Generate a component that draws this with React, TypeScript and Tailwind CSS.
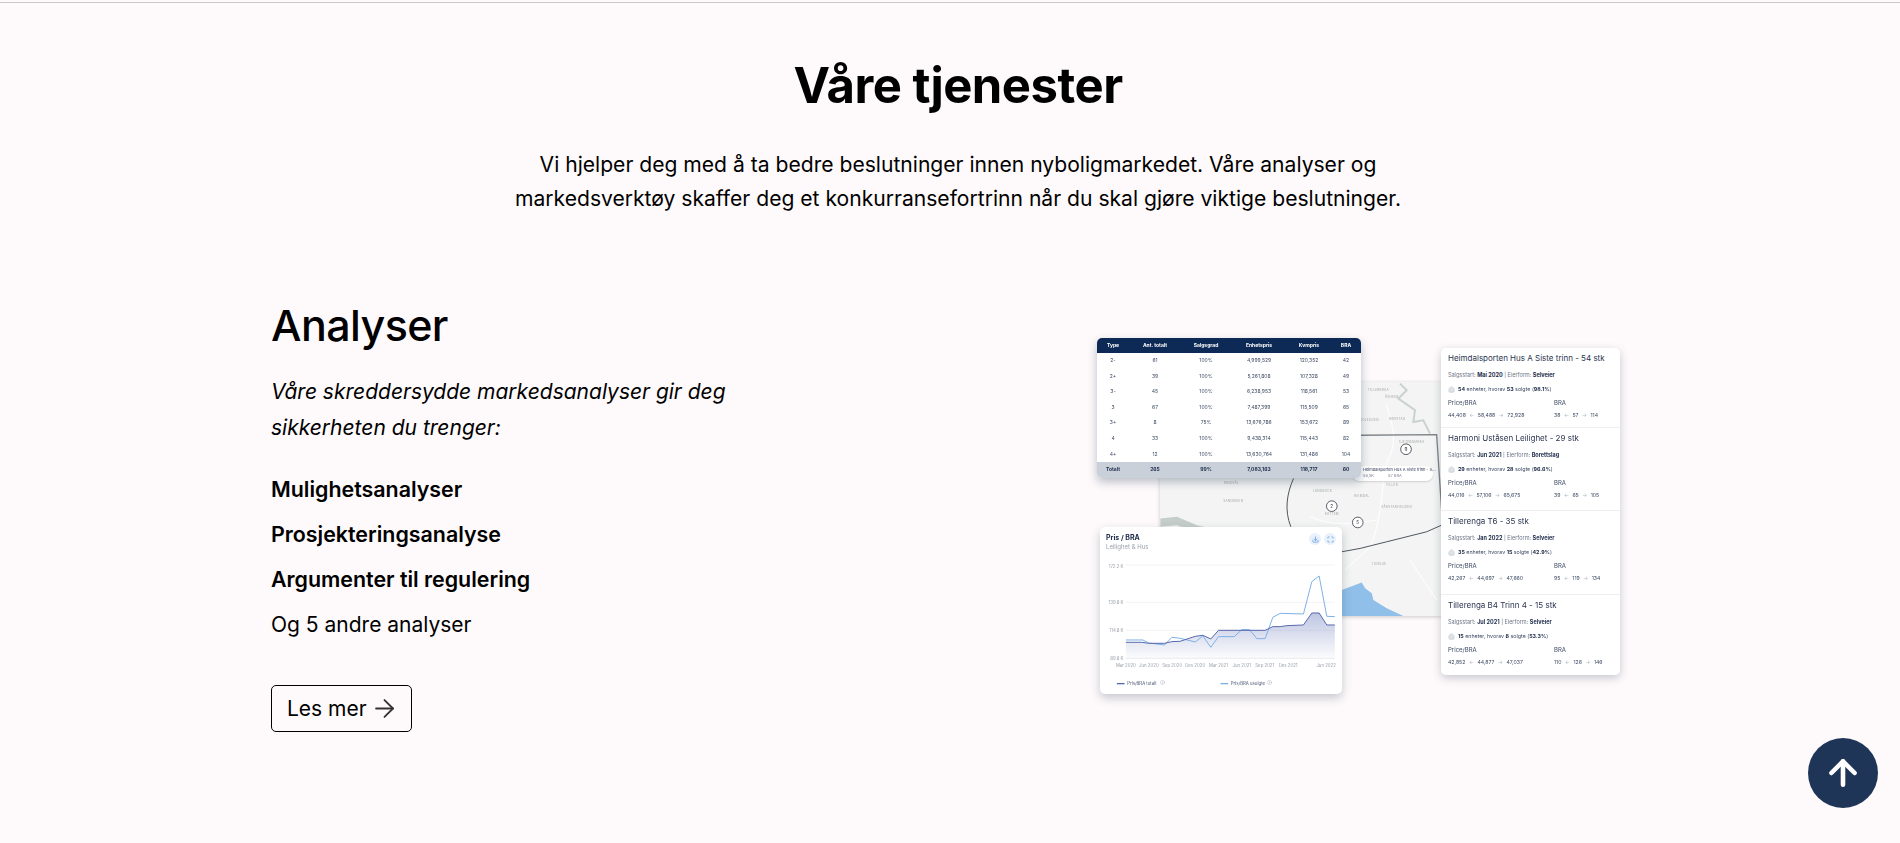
import { ArrowRight, ArrowUp, Download, Scan, House, Info } from 'lucide-react';

const TABLE_ROWS = [
  ['2-', '61', '100%', '4,999,529', '120,352', '42'],
  ['2+', '39', '100%', '5,261,808', '107,328', '49'],
  ['3-', '45', '100%', '6,238,953', '118,561', '53'],
  ['3', '67', '100%', '7,487,399', '115,509', '65'],
  ['3+', '8', '75%', '13,676,786', '153,672', '89'],
  ['4', '33', '100%', '9,438,314', '115,443', '82'],
  ['4+', '12', '100%', '13,630,764', '131,486', '104'],
];

const PROJECTS = [
  { title: 'Heimdalsporten Hus A Siste trinn - 54 stk', start: 'Mai 2020', form: 'Selveier', units: '54', sold: '53', pct: '98.1%', price: ['44,408', '58,488', '72,928'], bra: ['38', '57', '114'], h: 'h-[79px]' },
  { title: 'Harmoni Uståsen Leilighet - 29 stk', start: 'Jun 2021', form: 'Borettslag', units: '29', sold: '28', pct: '96.6%', price: ['44,016', '57,106', '65,675'], bra: ['39', '65', '105'], h: 'h-[82px]' },
  { title: 'Tillerenga T6 - 35 stk', start: 'Jan 2022', form: 'Selveier', units: '35', sold: '15', pct: '42.9%', price: ['42,267', '44,697', '47,660'], bra: ['95', '119', '134'], h: 'h-[83px]' },
  { title: 'Tillerenga B4 Trinn 4 - 15 stk', start: 'Jul 2021', form: 'Selveier', units: '15', sold: '8', pct: '53.3%', price: ['42,852', '44,877', '47,037'], bra: ['110', '126', '146'], h: 'h-[80px]' },
];

const LIGHT_LINE = '137,390 188,390 205,399 253,405 275,382 300,385 345,396 368,378 392,412 415,380 462,380 485,359 508,359 530,386 555,386 578,322 600,310 670,312 695,215 717,198 740,319 764,320';
const DARK_LINE = '137,397 185,397 205,400 253,400 275,395 300,394 345,379 368,376 392,387 415,361 555,361 578,350 600,350 620,347 670,345 695,309 717,309 740,345 764,345';

function PriceTable() {
  const cols = 'grid grid-cols-[32px_52px_50px_56px_44px_30px] items-center text-center';
  return (
    <div className="absolute left-[147px] top-0 z-20 w-[264px] overflow-hidden rounded-[5px] bg-white shadow-[0_4px_10px_rgba(30,50,80,0.3)]">
      <div className={`${cols} h-[15px] bg-[#0d2a57] text-[5px] font-bold text-white`}>
        {['Type', 'Ant. totalt', 'Salgsgrad', 'Enhetspris', 'Kvmpris', 'BRA'].map(h => <div key={h}>{h}</div>)}
      </div>
      {TABLE_ROWS.map(row => (
        <div key={row[0]} className={`${cols} h-[15.6px] text-[5px] text-[#3d4a63]`}>
          {row.map((c, i) => <div key={i}>{c}</div>)}
        </div>
      ))}
      <div className={`${cols} h-[15.8px] bg-[#c9d0da] text-[5px] font-bold text-[#1c2c4a]`}>
        {['Totalt', '265', '99%', '7,083,163', '118,717', '60'].map(h => <div key={h}>{h}</div>)}
      </div>
    </div>
  );
}

function MapPin({ x, y, n }: { x: number; y: number; n: string }) {
  return (
    <g>
      <circle cx={x} cy={y} r="16" fill="#fff" stroke="#3a3f4a" strokeWidth="2.5" />
      <text x={x} y={y + 5} textAnchor="middle" fontSize="14" fill="#333">{n}</text>
    </g>
  );
}

function MapLayer() {
  const labels: [string, number, number][] = [
    ['TILLER', 396, 346], ['HEIMDAL', 305, 382], ['LUNDBUCK', 187, 365], ['KATTEM', 215, 434],
    ['VÅRSTADHAUGEN', 410, 414], ['TUNSJØ', 356, 585], ['SJETNEMARKA', 455, 217], ['RØSSTAD', 412, 148],
    ['SOLEGGEN', 328, 153], ['TILLERBRUA', 355, 62], ['ÅSHEIM', 395, 84], ['RINGVÅL', -87, 342], ['SANDMOEN', -81, 396],
  ];
  return (
    <div className="absolute left-[210px] top-[44px] z-0 h-[234px] w-[282px] bg-[#f3f4f3] shadow-[0_1px_4px_rgba(0,0,0,0.2)]">
      <svg viewBox="-300 35 845 703" className="block h-full w-full">
        <path d="M-300 480 L-240 470 L-190 486 L-150 500 L-120 520 L-120 738 L-300 738 Z" fill="#6fa5df" />
        <path d="M-300 445 L-250 440 L-190 465 L-130 480 L-105 505 L-125 512 L-150 490 L-205 480 L-250 465 L-300 470 Z" fill="#c4cdc9" />
        <path d="M245 660 L305 637 L315 655 L335 670 L340 690 L380 715 L430 738 L245 738 Z" fill="#90bfe9" />
        <path d="M420 40 L440 60 L415 85 L465 120 L460 155 L490 150 L510 190" fill="none" stroke="#c9d2cf" strokeWidth="6" />
        <path d="M380 100 C390 160 420 200 380 280 C360 360 370 440 330 530 L255 600 M150 440 C220 470 280 460 350 450 M450 570 L530 690" fill="none" stroke="#fff" strokeWidth="3" />
        <path d="M300 195 L530 193 L545 420" fill="none" stroke="#7e8489" strokeWidth="4" />
        <path d="M100 325 C80 370 72 420 92 470" fill="none" stroke="#50555d" strokeWidth="3" />
        <path d="M545 465 L500 485 L380 515 L300 535 L245 545" fill="none" stroke="#50555d" strokeWidth="3" />
        {labels.map(([t, x, y]) => (
          <text key={t} x={x} y={y} textAnchor="middle" fontSize="9" letterSpacing="1" fill="#a3a8a8">{t}</text>
        ))}
        <MapPin x={438} y={237} n="9" />
        <MapPin x={215} y={408} n="2" />
        <MapPin x={293} y={457} n="5" />
      </svg>
      <div className="absolute left-[192px] top-[84px] h-[15px] w-[81px] rounded-[7px] bg-white pl-[11px] pt-[1px] text-[4px] leading-[6px] text-[#2a3550] shadow-[0_1px_2px_rgba(0,0,0,0.15)]">
        <div className="whitespace-nowrap">Heimdalsporten Hus A Siste trinn - S...</div>
        <div className="flex gap-[14px] text-[#7a8190]"><span>58,5K</span><span>57 BRA</span></div>
      </div>
    </div>
  );
}

function PriceChart() {
  return (
    <div className="absolute left-[150px] top-[189px] z-20 h-[167px] w-[242px] rounded-[5px] bg-white shadow-[0_4px_10px_rgba(30,50,80,0.25)]">
      <div className="flex h-[32.7px] items-start justify-between pl-[6px] pr-[6px] pt-[6px]">
        <div>
          <div className="text-[7px] font-bold leading-[9px] text-[#1b2a4a]">Pris / BRA</div>
          <div className="text-[6px] leading-[9px] text-[#9aa1ad]">Leilighet &amp; Hus</div>
        </div>
        <div className="flex gap-[3px]">
          <div className="flex h-[12px] w-[12px] items-center justify-center rounded-full bg-[#e8f1fc]"><Download size={7} color="#3f83d6" /></div>
          <div className="flex h-[12px] w-[12px] items-center justify-center rounded-full bg-[#e8f1fc]"><Scan size={7} color="#3f83d6" /></div>
        </div>
      </div>
      <svg viewBox="60 150 725 403" className="block h-[134.3px] w-[242px]">
        <defs>
          <linearGradient id="area" x1="0" y1="0" x2="0" y2="1">
            <stop offset="0" stopColor="#5b6fb5" stopOpacity="0.4" />
            <stop offset="1" stopColor="#5b6fb5" stopOpacity="0.02" />
          </linearGradient>
        </defs>
        {[165, 277, 361].map(y => <line key={y} x1="137" x2="764" y1={y} y2={y} stroke="#ececec" strokeWidth="2" />)}
        <line x1="137" x2="764" y1="445" y2="445" stroke="#d5d5d5" strokeWidth="1.5" />
        <polygon points={`${DARK_LINE} 764,445 137,445`} fill="url(#area)" />
        <polyline points={LIGHT_LINE} fill="none" stroke="#7db0e6" strokeWidth="3" />
        <polyline points={DARK_LINE} fill="none" stroke="#5568ad" strokeWidth="3" />
        {[['172.2 K', 173], ['139.8 K', 281], ['114.8 K', 366], ['89.8 K', 449]].map(([t, y]) => (
          <text key={t} x="130" y={y} textAnchor="end" fontSize="13" fill="#9aa0a8">{t}</text>
        ))}
        {[['Mar 2020', 137], ['Jun 2020', 206], ['Sep 2020', 276], ['Des 2020', 345], ['Mar 2021', 415], ['Jun 2021', 485], ['Sep 2021', 554], ['Des 2021', 624], ['Jun 2022', 738]].map(([t, x]) => (
          <text key={t} x={x} y="470" textAnchor="middle" fontSize="13" fill="#9aa0a8">{t}</text>
        ))}
        <line x1="110" x2="133" y1="521" y2="521" stroke="#5568ad" strokeWidth="4" />
        <text x="141" y="526" fontSize="13" fill="#4a5672">Pris/BRA totalt</text>
        <line x1="421" x2="444" y1="521" y2="521" stroke="#7db0e6" strokeWidth="4" />
        <text x="452" y="526" fontSize="13" fill="#4a5672">Pris/BRA usolgte</text>
      </svg>
      <Info size={5} color="#aab" className="absolute left-[60px] top-[153px]" />
      <Info size={5} color="#aab" className="absolute left-[167px] top-[153px]" />
    </div>
  );
}

function Range({ values }: { values: string[] }) {
  return (
    <div className="flex items-center gap-[3.5px] text-[5.2px] text-[#3d4a63]">
      <span>{values[0]}</span><span className="text-[#b5bac4]">←</span>
      <span>{values[1]}</span><span className="text-[#b5bac4]">→</span>
      <span>{values[2]}</span>
    </div>
  );
}

function ProjectList() {
  return (
    <div className="absolute left-[491px] top-[10px] z-10 w-[179px] overflow-hidden rounded-[5px] bg-[#eceef1] shadow-[0_3px_8px_rgba(30,50,80,0.25)]">
      <div className="flex flex-col gap-px">
        {PROJECTS.map(p => (
          <div key={p.title} className={`${p.h} bg-white pl-[7px] pt-[5px] text-[#3d4a63]`}>
            <div className="whitespace-nowrap text-[8px] leading-[11px] text-[#2b3550]">{p.title}</div>
            <div className="mt-[7.5px] whitespace-nowrap text-[5.5px] leading-[7px] text-[#6c7486]">
              Salgsstart: <b className="text-[#1c2c4a]">{p.start}</b> | Eierform: <b className="text-[#1c2c4a]">{p.form}</b>
            </div>
            <div className="mt-[6.5px] flex items-center gap-[3px] whitespace-nowrap text-[5.3px] leading-[8px]">
              <House size={7} color="#c5cbd3" fill="#dfe3e8" />
              <span><b className="text-[#1c2c4a]">{p.units}</b> enheter, hvorav <b className="text-[#1c2c4a]">{p.sold}</b> solgte (<b className="text-[#1c2c4a]">{p.pct}</b>)</span>
            </div>
            <div className="mt-[6px] flex">
              <div className="w-[106px]">
                <div className="text-[6px] leading-[8px]">Price/BRA</div>
                <div className="mt-[4.5px]"><Range values={p.price} /></div>
              </div>
              <div>
                <div className="text-[6px] leading-[8px]">BRA</div>
                <div className="mt-[4.5px]"><Range values={p.bra} /></div>
              </div>
            </div>
          </div>
        ))}
      </div>
    </div>
  );
}

export default function App() {
  return (
    <div className="relative h-[843px] overflow-hidden bg-[#fefafb] font-['Inter',sans-serif] text-black">
      <div className="h-[2px] bg-[#fefafb]" />
      <div className="h-px bg-[#c9c9c9]" />

      <section className="pl-[16px] pt-[55px] text-center">
        <h1 className="text-[49px] font-bold leading-[56px] tracking-[-0.5px]">Våre tjenester</h1>
        <p className="mx-auto mt-[34px] w-[920px] text-[21.1px] leading-[34px]">
          Vi hjelper deg med å ta bedre beslutninger innen nyboligmarkedet. Våre analyser og markedsverktøy skaffer deg et konkurransefortrinn når du skal gjøre viktige beslutninger.
        </p>
      </section>

      <section className="mx-auto mt-[81px] flex w-[1358px] justify-between">
        <div className="w-[500px]">
          <h2 className="text-[43px] font-[550] leading-[56px] tracking-[-0.6px]">Analyser</h2>
          <p className="mt-[21px] w-[480px] text-[21px] italic leading-[36px]">
            Våre skreddersydde markedsanalyser gir deg sikkerheten du trenger:
          </p>
          <ul className="mt-[28px] flex flex-col gap-[14px] text-[21px] leading-[31px]">
            <li className="text-[21.4px] font-semibold">Mulighetsanalyser</li>
            <li className="text-[21.4px] font-semibold">Prosjekteringsanalyse</li>
            <li className="text-[21.4px] font-semibold">Argumenter til regulering</li>
            <li>Og 5 andre analyser</li>
          </ul>
          <button type="button" className="mt-[45px] flex h-[47px] w-[141px] items-center gap-[3px] rounded-[5px] border border-black pl-[15px] text-[21px]">
            Les mer <ArrowRight size={29} strokeWidth={1.5} color="#333" />
          </button>
        </div>

        <div className="relative mt-[41px] h-[360px] w-[679px] blur-[0.3px]">
          <MapLayer />
          <PriceTable />
          <PriceChart />
          <ProjectList />
        </div>
      </section>

      <button type="button" className="fixed bottom-[35px] right-[22px] flex h-[70px] w-[70px] items-center justify-center rounded-full bg-[#1e3557] text-white">
        <ArrowUp size={40} strokeWidth={2.75} />
      </button>
    </div>
  );
}
